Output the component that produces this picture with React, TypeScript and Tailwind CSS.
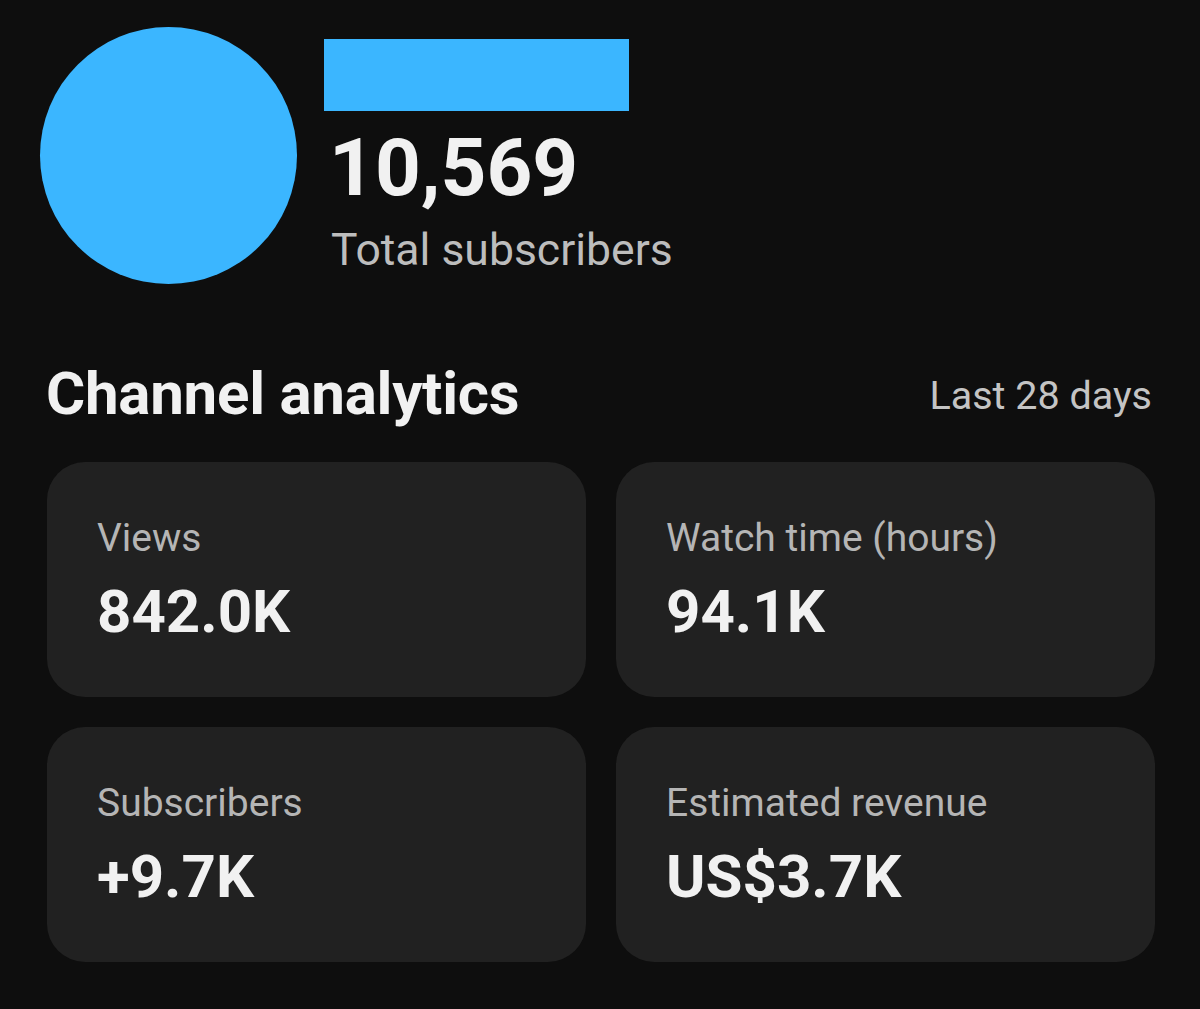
export default function App() {
  const stats = [
    { label: 'Views', value: '842.0K' },
    { label: 'Watch time (hours)', value: '94.1K' },
    { label: 'Subscribers', value: '+9.7K' },
    { label: 'Estimated revenue', value: 'US$3.7K' },
  ];

  return (
    <div className="min-h-[1009px] w-[1200px] bg-[#0e0e0e] font-['Roboto',sans-serif] text-[#f1f1f1]">
      {/* Channel header */}
      <div className="flex items-start pl-[40px] pt-[27px]">
        <div className="h-[257px] w-[257px] shrink-0 rounded-full bg-[#3bb6ff]" />
        <div className="ml-[27px] flex flex-col pt-[12px]">
          <div className="h-[72px] w-[305px] bg-[#3bb6ff]" />
          <div className="mt-[17px] pl-[5px] text-[80px] font-bold leading-[80px]">10,569</div>
          <div className="mt-[17px] pl-[7px] text-[44.5px] leading-[50px] text-[#bdbdbd]">Total subscribers</div>
        </div>
      </div>

      {/* Analytics */}
      <div className="mt-[78px] flex items-start justify-between pl-[46px] pr-[48px]">
        <h2 className="text-[60px] font-bold leading-[64px] tracking-[-0.25px]">Channel analytics</h2>
        <span className="mt-[12px] text-[39.5px] leading-[44px] text-[#c4c4c4]">Last 28 days</span>
      </div>

      <div className="mt-[36px] grid grid-cols-2 gap-[30px] pl-[47px] pr-[45px]">
        {stats.map((s) => (
          <div key={s.label} className="flex h-[235px] flex-col rounded-[38px] bg-[#212121] pl-[50px] pt-[54px]">
            <span className="text-[39px] leading-[44px] text-[#b5b5b5]">{s.label}</span>
            <span className="mt-[20px] text-[60px] font-bold leading-[64px]">{s.value}</span>
          </div>
        ))}
      </div>
    </div>
  );
}
